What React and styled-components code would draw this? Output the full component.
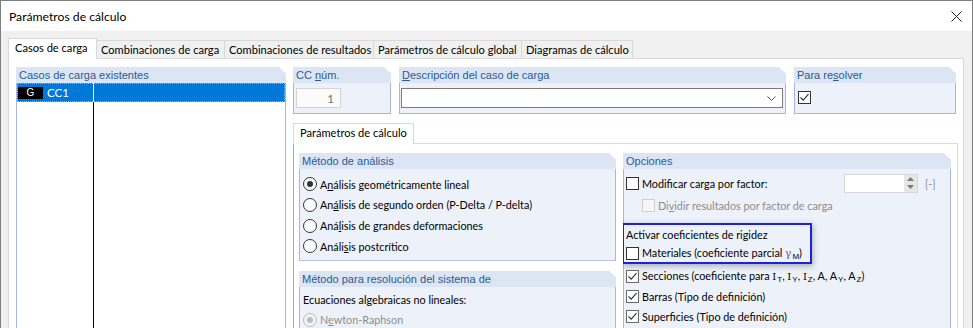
import React from 'react'
import styled, { createGlobalStyle } from 'styled-components'

const GlobalStyle = createGlobalStyle`
  html, body {
    margin: 0;
    padding: 0;
    background: #fff;
  }
  body {
    font-family: Lato, 'Liberation Sans', sans-serif;
    font-size: 11px;
    color: #000;
  }
  #root {
    width: 973px;
    height: 328px;
    overflow: hidden;
  }
`

const Window = styled.div`
  box-sizing: border-box;
  width: 973px;
  height: 360px;
  border: 1px solid #7f7f7f;
  display: flex;
  flex-direction: column;
  overflow: hidden;
`

const TitleBar = styled.div`
  height: 30px;
  flex: none;
  background: #fff;
  display: flex;
  align-items: center;
  justify-content: space-between;
  padding: 0 10px 0 8px;
`

const Title = styled.span`
  font-size: 12.2px;
  color: #000;
`

const Body = styled.div`
  flex: 1;
  background: #f0f0f0;
  padding: 7px 8px 0 7px;
  display: flex;
  flex-direction: column;
`

const TabStrip = styled.div`
  display: flex;
  align-items: flex-end;
  height: 20px;
  flex: none;
`

const Tab = styled.div`
  box-sizing: border-box;
  position: relative;
  z-index: 1;
  width: ${(p) => p.$w}px;
  height: ${(p) => (p.$active ? 21 : 18)}px;
  margin-bottom: ${(p) => (p.$active ? -1 : 0)}px;
  background: ${(p) => (p.$active ? '#fff' : '#f0f0f0')};
  border-top: 1px solid #d9d9d9;
  border-right: 1px solid #d9d9d9;
  border-left: ${(p) => (p.$active ? '1px solid #d9d9d9' : 'none')};
  padding-left: ${(p) => (p.$active ? 6 : 4)}px;
  padding-bottom: ${(p) => (p.$active ? 3 : 0)}px;
  display: flex;
  align-items: center;
  font-size: 11.1px;
  white-space: nowrap;
`

const Panel = styled.div`
  flex: 1;
  background: #fff;
  border: 1px solid #d9d9d9;
  padding: 8px 5px 0 7px;
  display: flex;
  gap: 7px;
`

const Group = styled.div`
  box-sizing: border-box;
  width: ${(p) => p.$w}px;
  flex: ${(p) => (p.$grow ? 1 : 'none')};
  display: flex;
  flex-direction: column;
  background: ${(p) => p.$bg || '#edf2fa'};
  border: 1px solid #a9b3e6;
  border-top: none;
  clip-path: polygon(0 0, calc(100% - 7px) 0, 100% 7px, 100% 100%, 0 100%);
`

const GroupHeader = styled.div`
  height: 16px;
  flex: none;
  margin: 0 -1px;
  background: #dbe5f4;
  color: #2b5a96;
  font-family: 'Liberation Sans', Arial, sans-serif;
  font-size: 11px;
  line-height: 16px;
  padding-left: 3px;
  white-space: nowrap;
`

const GroupBody = styled.div`
  flex: 1;
  display: flex;
  flex-direction: column;
  padding: ${(p) => p.$pad || '0'};
`

const ListRow = styled.div`
  display: flex;
  height: ${(p) => (p.$fill ? 'auto' : '19px')};
  flex: ${(p) => (p.$fill ? 1 : 'none')};
  background: ${(p) => (p.$selected ? '#0078d7' : '#fff')};
  outline: ${(p) => (p.$selected ? '1px dotted #f3a23c' : 'none')};
  outline-offset: -1px;
  color: ${(p) => (p.$selected ? '#fff' : '#000')};
`

const ListCell = styled.div`
  box-sizing: border-box;
  width: ${(p) => (p.$w ? p.$w + 'px' : 'auto')};
  flex: ${(p) => (p.$w ? 'none' : 1)};
  border-right: ${(p) => (p.$line ? `1px solid ${p.$line}` : 'none')};
  display: flex;
  align-items: center;
  padding-left: 1px;
`

const Badge = styled.span`
  width: 25px;
  height: 12px;
  background: #000;
  color: #fff;
  font-family: 'Liberation Sans', Arial, sans-serif;
  font-size: 10px;
  display: flex;
  align-items: center;
  justify-content: center;
`

const CaseName = styled.span`
  margin-left: 4px;
  font-size: 11.5px;
`

const RightColumn = styled.div`
  width: 665px;
  display: flex;
  flex-direction: column;
`

const TopRow = styled.div`
  display: flex;
  gap: 8px;
  height: 47px;
`

const NumberInput = styled.div`
  box-sizing: border-box;
  width: 45px;
  height: 20px;
  border: 1px solid #d4d4d4;
  background: #fbfbfb;
  color: #6d6d6d;
  font-size: 11.5px;
  display: flex;
  align-items: center;
  justify-content: flex-end;
  padding-right: 6px;
`

const Combo = styled.div`
  box-sizing: border-box;
  width: 382px;
  height: 20px;
  border: 1px solid #7a7a7a;
  background: #fff;
  display: flex;
  align-items: center;
  justify-content: flex-end;
  padding-right: 6px;
`

const InnerTabStrip = styled.div`
  display: flex;
  align-items: flex-end;
  height: 20px;
  margin-top: 9px;
  flex: none;
`

const InnerPanel = styled.div`
  flex: 1;
  border: 1px solid #d9d9d9;
  border-left-color: #a8a8a8;
  padding: 9px 6px 0 5px;
  display: flex;
  gap: 7px;
`

const Column = styled.div`
  display: flex;
  flex-direction: column;
  gap: 10px;
  width: ${(p) => p.$w}px;
`

const Row = styled.div`
  display: flex;
  align-items: center;
  height: ${(p) => p.$h || 21}px;
  margin-top: ${(p) => p.$mt || 0}px;
  margin-left: ${(p) => p.$indent || 0}px;
  flex: none;
  white-space: nowrap;
`

const Label = styled.span`
  margin-left: 3px;
  font-size: 10.8px;
  color: ${(p) => (p.$disabled ? '#8d8d8d' : '#000')};
  flex: ${(p) => (p.$grow ? 1 : 'none')};
`

const PlainText = styled.span`
  font-size: 10.8px;
  color: #000;
`

const U = styled.span`
  text-decoration: underline;
  text-underline-offset: 1px;
`

const RadioCircle = styled.span`
  box-sizing: border-box;
  width: 14px;
  height: 14px;
  border-radius: 50%;
  border: 1px solid ${(p) => (p.$disabled ? '#bcbcbc' : '#333')};
  background: ${(p) => (p.$disabled ? '#f4f4f4' : '#fff')};
  display: inline-flex;
  align-items: center;
  justify-content: center;
  flex: none;
  &::after {
    content: '';
    width: 6px;
    height: 6px;
    border-radius: 50%;
    background: ${(p) => (p.$disabled ? '#bcbcbc' : '#333')};
    display: ${(p) => (p.$on ? 'block' : 'none')};
  }
`

const Box = styled.span`
  box-sizing: border-box;
  width: 13px;
  height: 13px;
  border: 1px solid ${(p) => (p.$disabled ? '#d0d0d0' : p.$soft ? '#6a6a6a' : '#333')};
  background: ${(p) => (p.$disabled ? '#f6f6f6' : '#fff')};
  display: inline-flex;
  align-items: center;
  justify-content: center;
  flex: none;
`

const Highlight = styled.div`
  box-sizing: border-box;
  width: 190px;
  height: 41px;
  margin: 7px 0 0 -4px;
  border: 2px solid #1f1fe0;
  padding-left: 2px;
  box-shadow: 1px 2px 6px rgba(0, 0, 0, 0.3);
  display: flex;
  flex-direction: column;
`

const SpinBox = styled.div`
  box-sizing: border-box;
  width: 74px;
  height: 19px;
  border: 1px solid #d7d7d7;
  background: #fff;
  display: flex;
  justify-content: flex-end;
  flex: none;
`

const SpinButtons = styled.div`
  width: 13px;
  background: #e6e6e6;
  display: flex;
  flex-direction: column;
  align-items: center;
  justify-content: space-around;
`

const Unit = styled.span`
  width: 25px;
  margin-left: 7px;
  color: #8f8f8f;
  font-size: 10.8px;
  flex: none;
`

const Sym = styled.span`
  font-family: 'DejaVu Serif', serif;
  font-size: 10px;
`

const Sub = styled.span`
  font-family: 'Liberation Sans', Arial, sans-serif;
  font-size: 8px;
  vertical-align: -2px;
  margin-left: 1px;
`

const Gamma = styled.span`
  color: #6b55b8;
  font-family: 'DejaVu Serif', serif;
  font-size: 10.5px;
`

const Check = () => (
  <svg width="11" height="11" viewBox="0 0 11 11">
    <path d="M1.5 5.5 L4.2 8.2 L9.5 2.2" fill="none" stroke="#333" strokeWidth="1.1" />
  </svg>
)

const CheckBox = ({ checked, disabled, soft }) => (
  <Box $disabled={disabled} $soft={soft}>
    {checked && <Check />}
  </Box>
)

const Radio = ({ on, disabled, children }) => (
  <Row $h={20.67}>
    <RadioCircle $on={on} $disabled={disabled} />
    <Label $disabled={disabled}>{children}</Label>
  </Row>
)

const CheckRow = ({ checked, disabled, soft, children, ...rest }) => (
  <Row {...rest}>
    <CheckBox checked={checked} disabled={disabled} soft={soft} />
    <Label $disabled={disabled}>{children}</Label>
  </Row>
)

const tabs = [
  { label: 'Casos de carga', w: 89, active: true },
  { label: 'Combinaciones de carga', w: 128 },
  { label: 'Combinaciones de resultados', w: 149 },
  { label: 'Parámetros de cálculo global', w: 148 },
  { label: 'Diagramas de cálculo', w: 111 },
]

export default function App() {
  return (
    <>
      <GlobalStyle />
      <Window>
        <TitleBar>
          <Title>Parámetros de cálculo</Title>
          <svg width="11" height="11" viewBox="0 0 11 11">
            <path d="M0.5 0.5 L10.5 10.5 M10.5 0.5 L0.5 10.5" stroke="#222" strokeWidth="1" />
          </svg>
        </TitleBar>
        <Body>
          <TabStrip>
            {tabs.map((t) => (
              <Tab key={t.label} $w={t.w} $active={t.active}>
                {t.label}
              </Tab>
            ))}
          </TabStrip>
          <Panel>
            <Group $w={270} $bg="#fff">
              <GroupHeader>Casos de carga existentes</GroupHeader>
              <GroupBody>
                <ListRow $selected>
                  <ListCell $w={77} $line="#fff">
                    <Badge>G</Badge>
                    <CaseName>CC1</CaseName>
                  </ListCell>
                  <ListCell />
                </ListRow>
                <ListRow $fill>
                  <ListCell $w={77} $line="#000" />
                  <ListCell />
                </ListRow>
              </GroupBody>
            </Group>

            <RightColumn>
              <TopRow>
                <Group $w={98}>
                  <GroupHeader>
                    CC <U>n</U>úm.
                  </GroupHeader>
                  <GroupBody $pad="5px 2px 0">
                    <NumberInput>1</NumberInput>
                  </GroupBody>
                </Group>
                <Group $w={387}>
                  <GroupHeader>
                    <U>D</U>escripción del caso de carga
                  </GroupHeader>
                  <GroupBody $pad="5px 1px 0">
                    <Combo>
                      <svg width="9" height="5" viewBox="0 0 9 5">
                        <path d="M0.5 0.5 L4.5 4.5 L8.5 0.5" fill="none" stroke="#555" strokeWidth="1" />
                      </svg>
                    </Combo>
                  </GroupBody>
                </Group>
                <Group $w={162}>
                  <GroupHeader>
                    Para re<U>s</U>olver
                  </GroupHeader>
                  <GroupBody $pad="8px 3px 0">
                    <CheckBox checked />
                  </GroupBody>
                </Group>
              </TopRow>

              <InnerTabStrip>
                <Tab $w={121} $active>
                  Parámetros de cálculo
                </Tab>
              </InnerTabStrip>
              <InnerPanel>
                <Column $w={317}>
                  <Group $w={317}>
                    <GroupHeader>Método de análisis</GroupHeader>
                    <GroupBody $pad="5px 3px 3px">
                      <Radio on>
                        A<U>n</U>álisis geométricamente lineal
                      </Radio>
                      <Radio>
                        An<U>á</U>lisis de segundo orden (P-Delta / P-delta)
                      </Radio>
                      <Radio>
                        Aná<U>l</U>isis de grandes deformaciones
                      </Radio>
                      <Radio>
                        Análi<U>s</U>is postcrítico
                      </Radio>
                    </GroupBody>
                  </Group>
                  <Group $w={317} $grow>
                    <GroupHeader>Método para resolución del sistema de</GroupHeader>
                    <GroupBody $pad="3px 3px 0">
                      <Row $h={20}>
                        <PlainText>Ecuaciones algebraicas no lineales:</PlainText>
                      </Row>
                      <Radio on disabled>
                        N<U>e</U>wton-Raphson
                      </Radio>
                    </GroupBody>
                  </Group>
                </Column>

                <Group $w={328}>
                  <GroupHeader>Opciones</GroupHeader>
                  <GroupBody $pad="4px 0 0 2px">
                    <Row $h={20}>
                      <CheckBox />
                      <Label $grow>Modificar carga por factor:</Label>
                      <SpinBox>
                        <SpinButtons>
                          <svg width="7" height="4" viewBox="0 0 7 4">
                            <path d="M0 4 L3.5 0 L7 4 Z" fill="#7a7a7a" />
                          </svg>
                          <svg width="7" height="4" viewBox="0 0 7 4">
                            <path d="M0 0 L3.5 4 L7 0 Z" fill="#7a7a7a" />
                          </svg>
                        </SpinButtons>
                      </SpinBox>
                      <Unit>[-]</Unit>
                    </Row>
                    <CheckRow disabled $indent={16} $mt={2}>
                      Di<U>v</U>idir resultados por factor de carga
                    </CheckRow>
                    <Highlight>
                      <Row $h={19}>
                        <PlainText>Activar coeficientes de rigidez</PlainText>
                      </Row>
                      <CheckRow $h={18}>
                        Materiales (coeficiente parcial <Gamma>γ</Gamma>
                        <Sub>M</Sub>)
                      </CheckRow>
                    </Highlight>
                    <CheckRow checked soft $h={20} $mt={2}>
                      Secciones (coeficiente para <Sym>I</Sym>
                      <Sub>T</Sub>, <Sym>I</Sym>
                      <Sub>Y</Sub>, <Sym>I</Sym>
                      <Sub>Z</Sub>, A, A<Sub>Y</Sub>, A<Sub>Z</Sub>)
                    </CheckRow>
                    <CheckRow checked soft $h={20}>
                      Barras (Tipo de definición)
                    </CheckRow>
                    <CheckRow checked soft $h={20}>
                      Superficies (Tipo de definición)
                    </CheckRow>
                  </GroupBody>
                </Group>
              </InnerPanel>
            </RightColumn>
          </Panel>
        </Body>
      </Window>
    </>
  )
}
